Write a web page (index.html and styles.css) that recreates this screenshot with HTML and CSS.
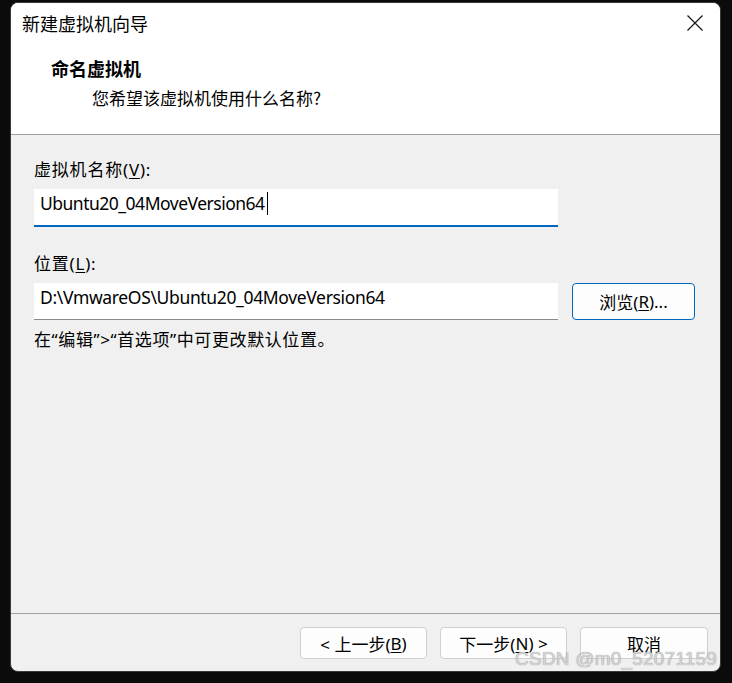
FILE: index.html
```html
<!DOCTYPE html>
<html lang="zh-CN">
<head>
<meta charset="utf-8">
<title>新建虚拟机向导</title>
<link rel="stylesheet" href="styles.css">
</head>
<body>
<div class="window">
  <div class="titlebar">
    <span class="title">新建虚拟机向导</span>
    <svg class="close" width="18" height="18" viewBox="0 0 18 18"><path d="M1.5 1.5 L16.5 16.5 M16.5 1.5 L1.5 16.5" stroke="#1a1a1a" stroke-width="1.3" fill="none"/></svg>
  </div>
  <div class="header">
    <div class="h-title">命名虚拟机</div>
    <div class="h-sub">您希望该虚拟机使用什么名称?</div>
  </div>
  <div class="content">
    <div class="label">虚拟机名称(<u>V</u>):</div>
    <div class="input focused"><span>Ubuntu20_04MoveVersion64</span><span class="caret"></span></div>
    <div class="label second">位置(<u>L</u>):</div>
    <div class="row">
      <div class="input plain"><span>D:\VmwareOS\Ubuntu20_04MoveVersion64</span></div>
      <div class="btn browse">浏览(<u>R</u>)...</div>
    </div>
    <div class="hint">在“编辑”&gt;“首选项”中可更改默认位置。</div>
  </div>
  <div class="footer">
    <div class="btn nav">&lt;&nbsp;上一步(<u>B</u>)</div>
    <div class="btn nav">下一步(<u>N</u>)&nbsp;&gt;</div>
    <div class="btn nav cancel">取消</div>
  </div>
  <div class="watermark">CSDN @m0_52071159</div>
</div>
</body>
</html>
```
FILE: styles.css
```css
html, body {
  margin: 0;
  padding: 0;
  background: #0b0b0b;
  width: 732px;
  height: 683px;
  overflow: hidden;
}
body {
  font-family: "Noto Sans", "Noto Sans CJK SC", sans-serif;
  color: #000;
}
.window {
  position: relative;
  margin: 2px 0 0 10px;
  width: 709px;
  height: 668px;
  border: 1px solid #3a3a3a;
  border-radius: 8px;
  overflow: hidden;
  background: #f0f0f0;
  display: flex;
  flex-direction: column;
}
.titlebar {
  background: #fff;
  height: 40px;
  display: flex;
  align-items: center;
  justify-content: space-between;
  padding: 0 16px 0 11px;
}
.title {
  font-family: "Noto Sans CJK SC", sans-serif;
  font-size: 18px;
  line-height: 22px;
}
.close { display: block; }
.header {
  background: #fff;
  padding-left: 40px;
  border-bottom: 1px solid #a0a0a0;
  box-sizing: border-box;
  height: 92px;
}
.h-title {
  font-family: "Noto Sans CJK SC", sans-serif;
  font-weight: 700;
  font-size: 18px;
  line-height: 24px;
  margin-top: 13px;
}
.h-sub {
  font-family: "Noto Sans CJK SC", sans-serif;
  font-size: 17px;
  line-height: 24px;
  margin-top: 6px;
  padding-left: 41px;
}
.content {
  flex: 1;
  padding: 24px 0 0 23px;
}
.label {
  font-family: "Noto Sans", "Noto Sans CJK SC", sans-serif;
  font-size: 17px;
  line-height: 22px;
  letter-spacing: 0.8px;
}
.label.second { margin-top: 26px; }
.input {
  width: 524px;
  height: 38px;
  box-sizing: border-box;
  background: #fff;
  display: flex;
  align-items: flex-start;
  padding: 2px 0 0 6px;
  line-height: 24px;
  font-family: "Noto Sans", sans-serif;
  font-size: 17.5px;
  letter-spacing: -0.5px;
  margin-top: 8px;
}
.input.focused {
  border-bottom: 2px solid #0067c0;
}
.input.plain {
  margin-top: 0;
  height: 37px;
  border-bottom: 1px solid #8a8a8a;
}
.input.plain span { letter-spacing: -0.35px; }
.caret {
  display: inline-block;
  width: 1px;
  height: 23px;
  background: #000;
  margin: 1px 0 0 2px;
}
.row {
  display: flex;
  gap: 14px;
  margin-top: 8px;
}
.btn {
  box-sizing: border-box;
  display: flex;
  align-items: center;
  justify-content: center;
  font-family: "Noto Sans", "Noto Sans CJK SC", sans-serif;
  font-size: 17px;
  background: #fdfdfd;
  border: 1px solid #d0d0d0;
  border-radius: 4px;
}
.browse {
  width: 123px;
  height: 37px;
  border: 1px solid #0067c0;
}
.hint {
  font-family: "Noto Sans", "Noto Sans CJK SC", sans-serif;
  font-size: 17px;
  line-height: 22px;
  letter-spacing: 0.6px;
  margin-top: 9px;
}
.footer {
  height: 58px;
  border-top: 1px solid #a0a0a0;
  display: flex;
  justify-content: flex-end;
  gap: 13px;
  padding: 13px 12px 0 0;
  box-sizing: border-box;
}
.nav {
  width: 127px;
  height: 32px;
}
.cancel { width: 128px; }
u { text-underline-offset: 2px; }
.watermark {
  position: absolute;
  right: 3px;
  bottom: 1px;
  font-family: "Liberation Sans", sans-serif;
  font-size: 19px;
  color: #d4d4d4;
  text-shadow: 0 0 1px #808080;
  letter-spacing: 0.2px;
}
```
